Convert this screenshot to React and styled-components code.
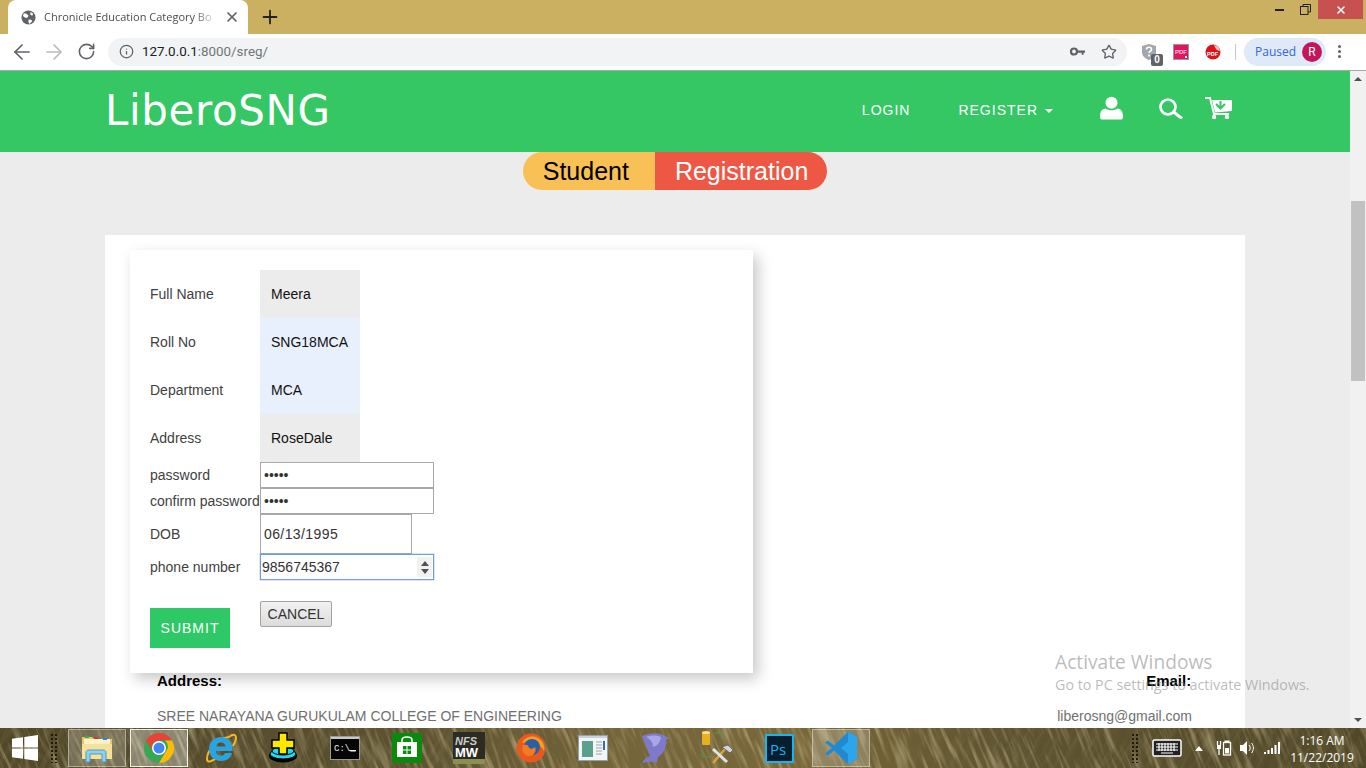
import React from 'react'
import styled, { createGlobalStyle } from 'styled-components'
import { ArrowLeft, ArrowRight, RotateCw, Info, Star, X, Plus } from 'lucide-react'

const GlobalStyle = createGlobalStyle`
	html, body {
		margin: 0;
		padding: 0;
		overflow: hidden;
		font-family: "Liberation Sans", Arial, sans-serif;
	}
	* {
		box-sizing: border-box;
	}
`

const Screen = styled.div`
	width: 1366px;
	height: 768px;
	display: flex;
	flex-direction: column;
	overflow: hidden;
	position: relative;
`

const TitleBar = styled.div`
	height: 34px;
	flex: none;
	background: #cbb062;
	display: flex;
	align-items: flex-end;
	padding-left: 8px;
`

const Tab = styled.div`
	width: 240px;
	height: 34px;
	background: #fff;
	border-radius: 8px 8px 0 0;
	display: flex;
	align-items: center;
	padding: 0 8px 0 13px;
	gap: 8px;
	color: #5f6368;
`

const TabTitle = styled.span`
	font: 11px "Open Sans", sans-serif;
	color: #4a4d52;
	width: 174px;
	margin: -2px -2px 0 0;
	white-space: nowrap;
	-webkit-mask-image: linear-gradient(90deg, #000 150px, transparent 174px);
	mask-image: linear-gradient(90deg, #000 150px, transparent 174px);
`

const NewTab = styled.div`
	width: 44px;
	height: 34px;
	display: flex;
	align-items: center;
	justify-content: center;
	color: #222;
`

const WindowControls = styled.div`
	margin-left: auto;
	align-self: flex-start;
	display: flex;
	align-items: flex-start;
	padding-right: 3px;
`

const WindowButton = styled.div`
	width: ${props => props.width}px;
	height: 19px;
	display: flex;
	align-items: center;
	justify-content: center;
	background: ${props => props.bg || 'transparent'};
	color: #fff;
`

const Toolbar = styled.div`
	height: 37px;
	flex: none;
	background: #fff;
	border-bottom: 1px solid #a9a9a9;
	display: flex;
	align-items: center;
	padding: 0 12px 1px 6px;
`

const NavButton = styled.div`
	width: 32px;
	height: 28px;
	display: flex;
	align-items: center;
	justify-content: center;
	color: ${props => props.off ? '#b9bbbe' : '#5f6368'};
`

const Omnibox = styled.div`
	width: 1019px;
	height: 28px;
	margin-left: 6px;
	background: #f1f3f4;
	border-radius: 14px;
	display: flex;
	align-items: center;
	padding: 0 2px 0 11px;
	color: #5f6368;
`

const Url = styled.span`
	margin-left: 8px;
	font: 13.4px Roboto, sans-serif;
	color: #202124;
	flex: 1;
`

const UrlRest = styled.span`
	color: #70757a;
`

const OmniIcon = styled.div`
	width: 32px;
	display: flex;
	justify-content: center;
	color: #5f6368;
`

const Extensions = styled.div`
	display: flex;
	align-items: center;
	margin-left: 6px;
`

const ExtSlot = styled.div`
	width: 32px;
	height: 28px;
	display: flex;
	align-items: center;
	justify-content: center;
	position: relative;
`

const ZeroBadge = styled.span`
	position: absolute;
	right: 2px;
	bottom: 0;
	width: 12px;
	height: 12px;
	background: #5f6368;
	border-radius: 2px;
	color: #fff;
	font: bold 10px/12px "Liberation Sans", sans-serif;
	text-align: center;
`

const Separator = styled.div`
	width: 1px;
	height: 16px;
	background: #c6c8ca;
	margin: 0 8px 0 6px;
`

const PausedChip = styled.div`
	width: 82px;
	height: 28px;
	background: #e0e9f8;
	border-radius: 14px;
	display: flex;
	align-items: center;
	justify-content: space-between;
	padding: 0 4px 0 11px;
	font: 12px "Open Sans", sans-serif;
	color: #3367d6;
`

const Avatar = styled.span`
	width: 20px;
	height: 20px;
	border-radius: 50%;
	background: #c2185b;
	color: #fff;
	font: 12px/20px Roboto, sans-serif;
	text-align: center;
`

const MenuDots = styled.div`
	margin-left: 7px;
	display: flex;
	flex-direction: column;
	gap: 2px;
	padding: 0 5px;
`

const Dot = styled.span`
	width: 3px;
	height: 3px;
	border-radius: 50%;
	background: #5f6368;
`

const Viewport = styled.div`
	height: 657px;
	flex: none;
	display: flex;
	position: relative;
	overflow: hidden;
`

const Page = styled.div`
	width: 1350px;
	flex: none;
	background: #ececec;
	overflow: hidden;
`

const Header = styled.header`
	height: 81px;
	background: #34c764;
	display: flex;
	align-items: center;
	padding: 0 118px 0 105px;
`

const Logo = styled.div`
	font: 42px/1 "Comic Sans MS", "DejaVu Sans", sans-serif;
	letter-spacing: 0.6px;
	color: #fff;
	margin-top: -1px;
`

const Nav = styled.nav`
	margin-left: auto;
	display: flex;
	align-items: center;
`

const NavLink = styled.a`
	font-size: 14px;
	letter-spacing: 1px;
	color: #fff;
	margin-top: -3px;
	margin-right: ${props => props.gap}px;
	display: flex;
	align-items: center;
	gap: 7px;
`

const Caret = styled.span`
	width: 0;
	height: 0;
	border-left: 4px solid transparent;
	border-right: 4px solid transparent;
	border-top: 4px solid #fff;
	margin-top: 2px;
`

const NavIcon = styled.div`
	margin-left: ${props => props.gap}px;
	display: flex;
	margin-top: -7px;
`

const TitlePill = styled.div`
	width: max-content;
	margin: 0 auto 45px;
	height: 38px;
	display: flex;
	border-radius: 19px;
	overflow: hidden;
	font-size: 25px;
	line-height: 38px;
`

const PillPart = styled.span`
	padding: 0 ${props => props.right}px 0 20px;
	background: ${props => props.bg};
	color: ${props => props.fg};
`

const Sheet = styled.div`
	width: 1140px;
	margin: 0 auto;
	background: #fff;
	padding: 15px 25px 60px;
`

const Card = styled.form`
	width: 623px;
	height: 423px;
	background: #fff;
	padding: 20px;
	box-shadow: 5px 6px 14px rgba(0, 0, 0, 0.22);
`

const Row = styled.div`
	display: flex;
	align-items: center;
`

const Label = styled.label`
	width: 110px;
	flex: none;
	font-size: 14px;
	color: #3f3f3f;
	white-space: nowrap;
`

const Filled = styled.input`
	width: 100px;
	height: 48px;
	border: 0;
	outline: 0;
	padding: 0 0 0 11px;
	font: 14px "Liberation Sans", sans-serif;
	color: #111;
	background: ${props => props.$auto ? '#e8f0fe' : '#ececec'};
`

const Boxed = styled.input`
	width: ${props => props.$w || 174}px;
	height: ${props => props.$h || 26}px;
	border: 1px solid #a9a9a9;
	outline: 0;
	padding: 0 3px;
	font: 14px "Liberation Sans", sans-serif;
	letter-spacing: ${props => props.$spaced ? '0.4px' : '0'};
	color: #333;
	background: #fff;
`

const PhoneWrap = styled.div`
	position: relative;
	width: 174px;
	height: 26px;
`

const PhoneInput = styled(Boxed)`
	border-color: #6f9be8;
	box-shadow: 0 0 0 1px rgba(111, 155, 232, 0.25);
	padding: 0 1px;
`

const Spin = styled.div`
	position: absolute;
	right: 2px;
	top: 3px;
	width: 15px;
	height: 20px;
	background: #f1f1f1;
	display: flex;
	flex-direction: column;
	align-items: center;
	justify-content: center;
	gap: 3px;
`

const SpinArrow = styled.span`
	width: 0;
	height: 0;
	border-left: 4px solid transparent;
	border-right: 4px solid transparent;
	border-${props => props.up ? 'bottom' : 'top'}: 5px solid #505050;
`

const ButtonRow = styled.div`
	display: flex;
	align-items: flex-start;
	padding-top: 21px;
`

const SubmitButton = styled.button`
	width: 80px;
	height: 40px;
	margin: 7px 30px 0 0;
	border: 0;
	background: #2ec866;
	color: #fff;
	font: 14px "Liberation Sans", sans-serif;
	letter-spacing: 1px;
`

const CancelButton = styled.button`
	width: 72px;
	height: 26px;
	padding: 0;
	border: 1px solid #a3a3a3;
	border-radius: 2px;
	background: linear-gradient(#f2f2f2, #dcdcdc);
	color: #333;
	font: 14px "Liberation Sans", sans-serif;
`

const Footer = styled.div`
	display: flex;
	justify-content: space-between;
	padding: 0 28px 0 27px;
`

const FooterColumn = styled.div`
	padding-left: ${props => props.indent || 0}px;
`

const FooterHead = styled.div`
	font-size: 15px;
	font-weight: bold;
	color: #000;
	line-height: 16px;
	padding-bottom: 19px;
	padding-left: ${props => props.indent || 0}px;
`

const FooterText = styled.div`
	font-size: 14px;
	line-height: 16px;
	color: #707070;
`

const Scrollbar = styled.div`
	width: 16px;
	flex: none;
	background: #f1f1f1;
	display: flex;
	flex-direction: column;
	align-items: center;
	justify-content: space-between;
	padding: 6px 0;
	position: relative;
`

const ScrollArrow = styled.span`
	width: 0;
	height: 0;
	border-left: 4px solid transparent;
	border-right: 4px solid transparent;
	border-${props => props.up ? 'bottom' : 'top'}: 4px solid #505050;
`

const Thumb = styled.div`
	position: absolute;
	top: 130px;
	left: 1px;
	width: 14px;
	height: 180px;
	background: #c1c1c1;
`

const Activation = styled.div`
	position: absolute;
	left: 1055px;
	top: 578px;
	color: rgba(130, 130, 130, 0.55);
	font-family: "Open Sans", sans-serif;
	pointer-events: none;
`

const ActivationTitle = styled.div`
	font-size: 19.2px;
	line-height: 26px;
`

const ActivationText = styled.div`
	font-size: 14.3px;
	line-height: 20px;
	white-space: nowrap;
`

const Taskbar = styled.div`
	height: 40px;
	flex: none;
	position: relative;
	background: linear-gradient(90deg, #514829 0, #5a5030 400px, #75653a 620px, #7a6838 800px, #5e5431 1000px, #514829 1366px);
`

const Wallpaper = styled.svg`
	position: absolute;
	left: 0;
	top: 0;
	width: 100%;
	height: 100%;
`

const TaskRow = styled.div`
	position: relative;
	height: 40px;
	display: flex;
	align-items: center;
`

const StartButton = styled.div`
	width: 50px;
	display: flex;
	justify-content: center;
`

const Gripper = styled.div`
	width: 8px;
	height: 30px;
	background-image: radial-gradient(#1d1a10 1px, transparent 1.2px);
	background-size: 4px 4px;
`

const TaskItems = styled.div`
	display: flex;
	gap: 4px;
	margin-left: 10px;
`

const TaskItem = styled.div`
	width: 58px;
	height: 38px;
	display: flex;
	align-items: center;
	justify-content: center;
	background: ${props => props.state === 'active' ? 'rgba(255,255,255,0.32)' : props.state === 'open' ? 'rgba(255,255,255,0.2)' : 'transparent'};
	border: 1px solid ${props => props.state === 'active' ? 'rgba(255,255,255,0.85)' : props.state === 'open' ? 'rgba(255,255,255,0.4)' : 'transparent'};
`

const Tray = styled.div`
	margin-left: auto;
	display: flex;
	align-items: center;
	color: #fff;
`

const TrayIcon = styled.div`
	display: flex;
	margin-left: ${props => props.gap}px;
`

const Clock = styled.div`
	width: 76px;
	margin: 2px 6px 0 4px;
	font: 12px/17px "Open Sans", sans-serif;
	color: #fff;
	text-align: center;
`

const Globe = () => (
	<svg width="15" height="15" viewBox="0 0 16 16">
		<circle cx="8" cy="8" r="7.5" fill="#5f6368" />
		<path d="M3 3.5l3 .5 2 2-1 2-2 .5-3-2zM10 2l3 2-1 2-2-1zM8 10l3 .5 1 1.5-3 3-1-2z" fill="#fff" />
	</svg>
)

const KeyIcon = () => (
	<svg width="15" height="9" viewBox="0 0 15 9">
		<circle cx="4" cy="4.5" r="3" fill="none" stroke="#5f6368" strokeWidth="2.2" />
		<path d="M7 3.5h8v2.2h-1.4v2h-2v-2H7z" fill="#5f6368" />
	</svg>
)

const HelpShield = () => (
	<svg width="14" height="16" viewBox="0 0 14 16">
		<path d="M7 0l7 2v6c0 4-3 6.500-7 8-4-1.500-7-4-7-8V2z" fill="#a2a6b0" />
		<path d="M4.500 5.500C4.500 2.500 9.500 2.500 9.500 5.500c0 1.800-2.500 1.800-2.500 3.500M7 10.500v2" fill="none" stroke="#fff" strokeWidth="1.700" />
	</svg>
)

const PdfSquare = () => (
	<svg width="16" height="16" viewBox="0 0 16 16">
		<rect x=".5" y=".5" width="15" height="15" fill="#e6135f" stroke="#999" />
		<text x="2" y="9.500" fontSize="6" fontWeight="bold" fontFamily="Liberation Sans" fill="#fbd0de">PDF</text>
		<rect x="12" y="12" width="2" height="2" fill="#fff" />
	</svg>
)

const PdfBall = () => (
	<svg width="16" height="16" viewBox="0 0 16 16">
		<circle cx="8" cy="8" r="7.500" fill="#e0101a" />
		<path d="M9 1a7 7 0 0 1 6 6c-3 0-5-3-6-6z" fill="#f7c4c4" />
		<text x="2" y="11.500" fontSize="5.500" fontWeight="bold" fontFamily="Liberation Sans" fill="#fff">PDF</text>
	</svg>
)

const UserIcon = () => (
	<svg width="23" height="24" viewBox="0 0 24 24" fill="#fff">
		<circle cx="12" cy="6.500" r="6.300" />
		<path d="M0 21c0-5 2-8 5.500-8.500 3.500 2.500 9.500 2.500 13 0C22 13 24 16 24 21c0 2-1 3-3 3H3c-2 0-3-1-3-3z" />
	</svg>
)

const SearchIcon = () => (
	<svg width="24" height="21" viewBox="0 0 24 21" fill="none" stroke="#fff">
		<circle cx="9" cy="9" r="7.500" strokeWidth="2.700" />
		<path d="M14.500 14L23 20.500" strokeWidth="3" />
	</svg>
)

const CartIcon = () => (
	<svg width="27" height="22" viewBox="0 0 27 22">
		<path d="M0 1h5l4 16h15" fill="none" stroke="#fff" strokeWidth="2" />
		<path d="M7 3h20v11l-17 1.500z" fill="#fff" />
		<path d="M15.500 4v7M11 7l4.500 4.500L20 7" fill="none" stroke="#34c764" strokeWidth="2" />
		<circle cx="9" cy="20" r="2.200" fill="#fff" />
		<circle cx="22" cy="20" r="2.200" fill="#fff" />
	</svg>
)

const WindowsLogo = () => (
	<svg width="26" height="26" viewBox="0 0 26 26" fill="#fff">
		<path d="M0 3.700L11 2.200V12.400H0zM12.300 2L26 0V12.400H12.300zM0 13.600H11V23.800L0 22.300zM12.300 13.600H26V26L12.300 24z" />
	</svg>
)

const FolderIcon = () => (
	<svg width="32" height="30" viewBox="0 0 32 30">
		<path d="M1 4h10l2 2h18v20H1z" fill="#e8c766" />
		<path d="M3 6h26v5H3z" fill="#fdf3c8" />
		<rect x="4" y="3" width="4" height="2" fill="#35b04a" />
		<rect x="13" y="4" width="4" height="2" fill="#d0392b" />
		<rect x="22" y="5" width="4" height="2" fill="#2f80d8" />
		<path d="M1 11h30v15H1z" fill="#f7e09a" />
		<path d="M5 29V20c0-2 1-3 3-3h14c2 0 3 1 3 3v9h-4v-8H9v8z" fill="#8fd0ee" stroke="#4f9bc9" />
	</svg>
)

const ChromeIcon = () => (
	<svg width="30" height="30" viewBox="0 0 30 30">
		<circle cx="15" cy="15" r="15" fill="#34a853" />
		<path d="M15 0a15 15 0 0 1 13 7.500H15A7.500 7.500 0 0 0 8.500 19L2 7.500A15 15 0 0 1 15 0z" fill="#ea4335" />
		<path d="M28 7.500A15 15 0 0 1 15 30l6.500-11a7.500 7.500 0 0 0-.5-11.500z" fill="#fbbc05" />
		<circle cx="15" cy="15" r="7" fill="#fff" />
		<circle cx="15" cy="15" r="5.500" fill="#4285f4" />
	</svg>
)

const IeIcon = () => (
	<svg width="32" height="32" viewBox="0 0 32 32">
		<path d="M24 5C12 7 2 18 2 27c0 4 5 3 9-1" fill="none" stroke="#f2b92a" strokeWidth="2" />
		<path d="M16 5C9 5 4 10 4 17s5 12 12 12c6 0 10-3 11-8h-7c-1 2-2 2.500-4 2.500-3 0-5-2-5-4.500h16.500C28 10 23 5 16 5zm-5 9.500c.5-2.500 2.500-4 5-4s4 1.500 4.500 4z" fill="#2aa3e0" />
		<path d="M24 5c4-3 7-3 7 1 0 2-1 5-3 8" fill="none" stroke="#f2b92a" strokeWidth="2" />
	</svg>
)

const InstallerIcon = () => (
	<svg width="30" height="32" viewBox="0 0 30 32">
		<ellipse cx="15" cy="24" rx="14" ry="6.500" fill="#000" />
		<ellipse cx="15" cy="22" rx="13" ry="5" fill="#20d8f0" stroke="#000" />
		<ellipse cx="15" cy="19" rx="11" ry="4" fill="#20d8f0" stroke="#000" />
		<path d="M11 1h8v7h7v8h-7v6h-8v-6H4V8h7z" fill="#ffe800" stroke="#000" strokeWidth="1.500" />
	</svg>
)

const CmdIcon = () => (
	<svg width="30" height="24" viewBox="0 0 30 24">
		<rect x=".5" y=".5" width="29" height="23" fill="#050505" stroke="#9a9a9a" />
		<rect x="1" y="1" width="28" height="2" fill="#c9c9c9" />
		<text x="4" y="15" fontSize="9" fontFamily="Liberation Mono" fill="#eee">C:\_</text>
		<rect x="19" y="14" width="7" height="1" fill="#eee" />
	</svg>
)

const StoreIcon = () => (
	<svg width="30" height="30" viewBox="0 0 30 30">
		<rect width="30" height="30" fill="#0a8a0a" />
		<path d="M10 9V7c0-4 10-4 10 0v2" fill="none" stroke="#fff" strokeWidth="1.500" />
		<path d="M5 9h20v15H5z" fill="#fff" />
		<path d="M11 13h3.500v3.500H11zM15.500 13H19v3.500h-3.500zM11 17.500h3.500V21H11zM15.500 17.500H19V21h-3.500z" fill="#0a8a0a" />
	</svg>
)

const NfsIcon = () => (
	<svg width="32" height="32" viewBox="0 0 32 32">
		<rect width="32" height="32" fill="#2c2c24" />
		<rect y="27" width="32" height="5" fill="#8a9150" />
		<text x="2" y="13" fontSize="11" fontStyle="italic" fontWeight="bold" fontFamily="Liberation Sans" fill="#ccc">NFS</text>
		<text x="2" y="25" fontSize="13" fontWeight="bold" fontFamily="Liberation Sans" fill="#fff">MW</text>
	</svg>
)

const FirefoxIcon = () => (
	<svg width="30" height="30" viewBox="0 0 30 30">
		<circle cx="15" cy="15" r="14.500" fill="#e8591f" />
		<path d="M6 10C9 4 16 2 22 5c5 3 7 8 6 13-4-8-9-6-10-9-3-1-8 0-12 1z" fill="#f9a01b" />
		<circle cx="16" cy="14" r="8" fill="#2a5fa8" />
		<path d="M7 12c3-1 6 0 6 3 2 1 4 1 6-1 2 4-1 9-6 9-5 0-8-5-6-11z" fill="#f47a1f" />
	</svg>
)

const AppWindowIcon = () => (
	<svg width="30" height="26" viewBox="0 0 30 26">
		<rect x=".5" y=".5" width="29" height="25" fill="#f2f4f6" stroke="#8fa1b5" />
		<rect x="1" y="1" width="28" height="2" fill="#c7d2df" />
		<rect x="4" y="6" width="11" height="16" fill="#5aa08f" />
		<path d="M18 7h6M18 10h6M18 13h6M18 16h6M18 19h6" stroke="#9aa5b0" />
		<rect x="25" y="6" width="2" height="9" fill="#2f6fb0" />
	</svg>
)

const DolphinIcon = () => (
	<svg width="28" height="32" viewBox="0 0 28 32">
		<path d="M1 4C7 1 16 0 22 3L28 6 25 8C26 16 22 22 17 25L16 31C11 29 6 30 1 31 3 27 6 25 9 24 7 19 5 14 3 9Z" fill="#7f79c9" />
		<path d="M5 5c5-2 11-2 15 0-1 6-4 9-8 10C12 10 9 7 5 5z" fill="#a9a5e6" />
	</svg>
)

const ToolsIcon = () => (
	<svg width="32" height="34" viewBox="0 0 32 34">
		<rect x="1" y="1" width="8" height="13" rx="1" fill="#e8b020" />
		<ellipse cx="5" cy="1.500" rx="4" ry="1.500" fill="#f8e090" />
		<path d="M14 2h7v8M1 20v6h8" fill="none" stroke="#35b04a" strokeDasharray="2 1" />
		<path d="M12 32L24 18" stroke="#d9a53a" strokeWidth="2.500" />
		<path d="M12 18l14 13" stroke="#dfe3ea" strokeWidth="3" />
		<path d="M21 16l6-2 5 5-3 3z" fill="#cfd5de" stroke="#444" strokeWidth=".6" />
	</svg>
)

const PhotoshopIcon = () => (
	<svg width="29" height="29" viewBox="0 0 29 29">
		<rect x="1" y="1" width="27" height="27" fill="#071e2e" stroke="#19b3f0" strokeWidth="2" />
		<text x="5" y="21" fontSize="15" fontFamily="Open Sans" fill="#19b3f0">Ps</text>
	</svg>
)

const VsCodeIcon = () => (
	<svg width="32" height="32" viewBox="0 0 32 32">
		<path d="M23 0l9 4.500v23L23 32 9 18.500 3 23.500 0 21.500 7 16 0 10.500l3-2 6 5z" fill="#1f8ad2" />
		<path d="M23 0l9 4.500v23L23 32V22l-7-6 7-6z" fill="#2ba5ec" />
	</svg>
)

const KeyboardIcon = () => (
	<svg width="30" height="18" viewBox="0 0 30 18">
		<rect x="1" y="1" width="28" height="16" rx="1.500" fill="#222" stroke="#fff" strokeWidth="1.500" />
		<path d="M4 5h22M4 8h22M4 11h22M7 4v8M10 4v8M13 4v8M16 4v8M19 4v8M22 4v8M9 14h12" stroke="#fff" strokeWidth="1.200" />
	</svg>
)

const PowerIcon = () => (
	<svg width="16" height="16" viewBox="0 0 16 16" fill="none" stroke="#fff">
		<rect x="7.500" y="2.500" width="7" height="12.500" strokeWidth="1.300" />
		<rect x="9" y="1" width="4" height="1.500" fill="#fff" />
		<rect x="9" y="8" width="4" height="5.500" fill="#fff" stroke="none" />
		<path d="M1.500 1v4M4.500 1v4M3 9v6" strokeWidth="1.300" />
		<rect x="1" y="5" width="4" height="4" fill="#fff" stroke="none" />
	</svg>
)

const SpeakerIcon = () => (
	<svg width="16" height="16" viewBox="0 0 16 16">
		<path d="M1 5h3l4-4v14l-4-4H1z" fill="#fff" />
		<path d="M10 5c1.500 2 1.500 4 0 6M12.500 3c2.500 3 2.500 7 0 10" fill="none" stroke="#fff" />
	</svg>
)

const SignalIcon = () => (
	<svg width="16" height="12" viewBox="0 0 16 12" fill="#fff">
		<path d="M0 10h2v2H0zM3.500 8h2v4h-2zM7 6h2v6H7zM10.500 3h2v9h-2zM14 0h2v12h-2z" />
	</svg>
)

// grass streaks of the desktop wallpaper showing through the taskbar
const GrassTexture = () => (
	<Wallpaper>
		<defs>
			<filter id="lightGrass" x="0" y="0" width="100%" height="100%">
				<feTurbulence type="fractalNoise" baseFrequency="0.02 0.22" numOctaves="3" seed="4" />
				<feColorMatrix values="0 0 0 0 0.72  0 0 0 0 0.62  0 0 0 0 0.36  1.3 0 0 0 -0.62" />
			</filter>
			<filter id="darkGrass" x="0" y="0" width="100%" height="100%">
				<feTurbulence type="fractalNoise" baseFrequency="0.02 0.18" numOctaves="3" seed="11" />
				<feColorMatrix values="0 0 0 0 0.16  0 0 0 0 0.13  0 0 0 0 0.05  1.3 0 0 0 -0.55" />
			</filter>
		</defs>
		<rect x="-700" y="-700" width="2800" height="1500" filter="url(#darkGrass)" transform="rotate(-62 683 20)" />
		<rect x="-700" y="-700" width="2800" height="1500" filter="url(#lightGrass)" transform="rotate(68 683 20)" />
	</Wallpaper>
)

const taskIcons = [
	{ icon: <FolderIcon />, state: 'open' },
	{ icon: <ChromeIcon />, state: 'active' },
	{ icon: <IeIcon /> },
	{ icon: <InstallerIcon /> },
	{ icon: <CmdIcon /> },
	{ icon: <StoreIcon /> },
	{ icon: <NfsIcon /> },
	{ icon: <FirefoxIcon /> },
	{ icon: <AppWindowIcon /> },
	{ icon: <DolphinIcon /> },
	{ icon: <ToolsIcon /> },
	{ icon: <PhotoshopIcon /> },
	{ icon: <VsCodeIcon />, state: 'open' },
]

const App = () => {
	return (
		<Screen>
			<GlobalStyle />
			<TitleBar>
				<Tab>
					<Globe />
					<TabTitle>Chronicle Education Category Bo</TabTitle>
					<X size={16} strokeWidth={2.6} />
				</Tab>
				<NewTab>
					<Plus size={22} strokeWidth={2} />
				</NewTab>
				<WindowControls>
					<WindowButton width={26}>
						<svg width="9" height="3"><rect width="9" height="2" y="1" fill="#222" /></svg>
					</WindowButton>
					<WindowButton width={26}>
						<svg width="11" height="11" fill="none" stroke="#222"><rect x=".5" y="2.500" width="7.500" height="8" /><path d="M3 2.500V.5h7.500v7.500H8" /></svg>
					</WindowButton>
					<WindowButton width={45} bg="#c75050">
						<X size={12} strokeWidth={3} />
					</WindowButton>
				</WindowControls>
			</TitleBar>
			<Toolbar>
				<NavButton><ArrowLeft size={24} strokeWidth={1.7} /></NavButton>
				<NavButton off><ArrowRight size={24} strokeWidth={1.7} /></NavButton>
				<NavButton><RotateCw size={19} strokeWidth={2} /></NavButton>
				<Omnibox>
					<Info size={15} strokeWidth={2} />
					<Url>127.0.0.1<UrlRest>:8000/sreg/</UrlRest></Url>
					<OmniIcon><KeyIcon /></OmniIcon>
					<OmniIcon><Star size={16} strokeWidth={2} /></OmniIcon>
				</Omnibox>
				<Extensions>
					<ExtSlot><HelpShield /><ZeroBadge>0</ZeroBadge></ExtSlot>
					<ExtSlot><PdfSquare /></ExtSlot>
					<ExtSlot><PdfBall /></ExtSlot>
				</Extensions>
				<Separator />
				<PausedChip>Paused<Avatar>R</Avatar></PausedChip>
				<MenuDots><Dot /><Dot /><Dot /></MenuDots>
			</Toolbar>
			<Viewport>
				<Page>
					<Header>
						<Logo>LiberoSNG</Logo>
						<Nav>
							<NavLink gap={48}>LOGIN</NavLink>
							<NavLink gap={0}>REGISTER <Caret /></NavLink>
							<NavIcon gap={47}><UserIcon /></NavIcon>
							<NavIcon gap={36}><SearchIcon /></NavIcon>
							<NavIcon gap={22}><CartIcon /></NavIcon>
						</Nav>
					</Header>
					<TitlePill>
						<PillPart bg="#f8c055" fg="#000" right={26}>Student</PillPart>
						<PillPart bg="#ee5744" fg="#fff" right={19}>Registration</PillPart>
					</TitlePill>
					<Sheet>
						<Card>
							<Row><Label>Full Name</Label><Filled readOnly value="Meera" /></Row>
							<Row><Label>Roll No</Label><Filled $auto readOnly value="SNG18MCA" /></Row>
							<Row><Label>Department</Label><Filled $auto readOnly value="MCA" /></Row>
							<Row><Label>Address</Label><Filled readOnly value="RoseDale" /></Row>
							<Row><Label>password</Label><Boxed type="password" readOnly value="abcde" /></Row>
							<Row><Label>confirm password</Label><Boxed type="password" readOnly value="abcde" /></Row>
							<Row><Label>DOB</Label><Boxed $w={152} $h={40} $spaced readOnly value="06/13/1995" /></Row>
							<Row>
								<Label>phone number</Label>
								<PhoneWrap>
									<PhoneInput readOnly value="9856745367" />
									<Spin><SpinArrow up /><SpinArrow /></Spin>
								</PhoneWrap>
							</Row>
							<ButtonRow>
								<SubmitButton type="button">SUBMIT</SubmitButton>
								<CancelButton type="button">CANCEL</CancelButton>
							</ButtonRow>
						</Card>
						<Footer>
							<FooterColumn>
								<FooterHead>Address:</FooterHead>
								<FooterText>SREE NARAYANA GURUKULAM COLLEGE OF ENGINEERING</FooterText>
							</FooterColumn>
							<FooterColumn>
								<FooterHead indent={89}>Email:</FooterHead>
								<FooterText>liberosng@gmail.com</FooterText>
							</FooterColumn>
						</Footer>
					</Sheet>
				</Page>
				<Scrollbar>
					<ScrollArrow up />
					<Thumb />
					<ScrollArrow />
				</Scrollbar>
				<Activation>
					<ActivationTitle>Activate Windows</ActivationTitle>
					<ActivationText>Go to PC settings to activate Windows.</ActivationText>
				</Activation>
			</Viewport>
			<Taskbar>
				<GrassTexture />
				<TaskRow>
					<StartButton><WindowsLogo /></StartButton>
					<Gripper />
					<TaskItems>
						{taskIcons.map((item, i) => (
							<TaskItem key={i} state={item.state}>{item.icon}</TaskItem>
						))}
					</TaskItems>
					<Tray>
						<Gripper />
						<TrayIcon gap={13}><KeyboardIcon /></TrayIcon>
						<TrayIcon gap={13}>
							<svg width="8" height="5"><path d="M0 5l4-5 4 5z" fill="#fff" /></svg>
						</TrayIcon>
						<TrayIcon gap={13}><PowerIcon /></TrayIcon>
						<TrayIcon gap={7}><SpeakerIcon /></TrayIcon>
						<TrayIcon gap={9}><SignalIcon /></TrayIcon>
						<Clock>1:16 AM<br />11/22/2019</Clock>
					</Tray>
				</TaskRow>
			</Taskbar>
		</Screen>
	)
}

export default App
